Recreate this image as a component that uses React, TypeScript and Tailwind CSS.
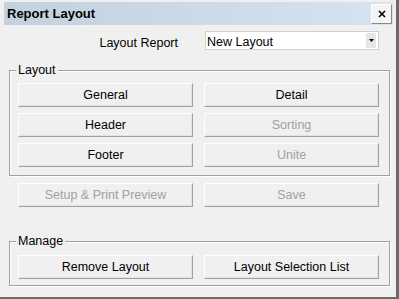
import React from "react";

const font = { fontFamily: '"Liberation Sans", Arial, sans-serif' };

function Btn({ label, disabled }: { label: string; disabled?: boolean }) {
  return (
    <div
      className={`h-[24px] flex items-center justify-center bg-[#f0f0f0] border-t border-l border-white border-r border-b border-r-[#a0a0a0] border-b-[#a0a0a0] shadow-[inset_-1px_-1px_0_#e3e3e3] text-[12.5px] ${
        disabled ? "text-[#a0a0a0]" : "text-black"
      }`}
    >
      {label}
    </div>
  );
}

function Group({
  label,
  className,
  children,
}: {
  label: string;
  className: string;
  children: React.ReactNode;
}) {
  return (
    <div
      className={`relative border border-[#a0a0a0] shadow-[inset_1px_1px_0_#ffffff,1px_1px_0_#ffffff] ${className}`}
    >
      <div className="absolute left-[6px] top-[-8px] px-[2px] bg-[#f0f0f0] text-[12.5px] leading-[14px] text-black">
        {label}
      </div>
      {children}
    </div>
  );
}

export default function App() {
  return (
    <div
      style={font}
      className="w-[399px] h-[299px] bg-[#f0f0f0] border-r-[3px] border-b-[2px] border-r-[#6a6a6a] border-b-[#6a6a6a] pl-[4px] pt-[2px] flex flex-col overflow-hidden"
    >
      <div className="h-[23px] w-[389px] bg-gradient-to-r from-[#c3d1df] to-[#d6e4f2] flex items-center justify-between pl-[3px] pr-[1px]">
        <span className="font-bold text-[13px] text-black">Report Layout</span>
        <div className="w-[21px] h-[20px] bg-[#f4f4f4] border-t border-l border-white border-r border-b border-r-[#8a8a8a] border-b-[#8a8a8a] flex items-center justify-center">
          <svg width="8" height="8" viewBox="0 0 8 8">
            <path d="M1 1L7 7M7 1L1 7" stroke="#000" strokeWidth="1.6" />
          </svg>
        </div>
      </div>

      <div className="mt-[6px] flex items-center h-[19px]">
        <div className="w-[174px] text-right text-[12.5px] text-black pt-[5px]">Layout Report</div>
        <div className="ml-[27px] w-[174px] h-[19px] bg-white border border-[#d0d0d0] flex items-center justify-between pl-[1px] pr-[2px]">
          <span className="text-[12.5px] text-black pt-[3px]">New Layout</span>
          <div className="w-[10px] h-[15px] bg-[#e6e6e6] flex items-center justify-center">
            <svg width="5" height="3" viewBox="0 0 5 3">
              <path d="M0 0H5L2.5 3Z" fill="#000" />
            </svg>
          </div>
        </div>
      </div>

      <Group label="Layout" className="mt-[20px] ml-[5px] w-[381px] pt-[12px] pb-[8px] pl-[8px]">
        <div className="grid grid-cols-[175px_175px] gap-x-[11px] gap-y-[6px]">
          <Btn label="General" />
          <Btn label="Detail" />
          <Btn label="Header" />
          <Btn label="Sorting" disabled />
          <Btn label="Footer" />
          <Btn label="Unite" disabled />
        </div>
      </Group>

      <div className="mt-[7px] ml-[14px] grid grid-cols-[175px_175px] gap-x-[11px]">
        <Btn label="Setup & Print Preview" disabled />
        <Btn label="Save" disabled />
      </div>

      <Group label="Manage" className="mt-[34px] ml-[5px] w-[381px] pt-[13px] pb-[6px] pl-[8px]">
        <div className="grid grid-cols-[175px_175px] gap-x-[11px]">
          <Btn label="Remove Layout" />
          <Btn label="Layout Selection List" />
        </div>
      </Group>
    </div>
  );
}
